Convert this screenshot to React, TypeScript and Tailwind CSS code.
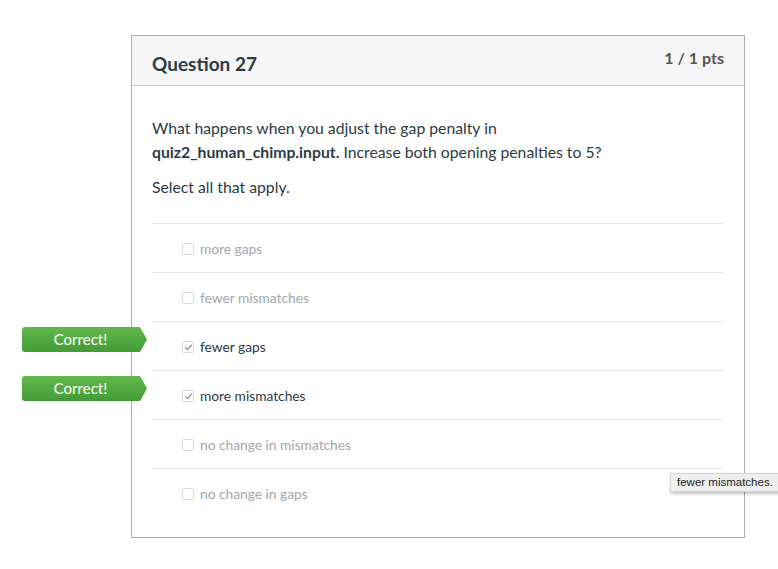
import React from 'react';

type Answer = { text: string; checked: boolean; correct?: boolean };

const answers: Answer[] = [
  { text: 'more gaps', checked: false },
  { text: 'fewer mismatches', checked: false },
  { text: 'fewer gaps', checked: true, correct: true },
  { text: 'more mismatches', checked: true, correct: true },
  { text: 'no change in mismatches', checked: false },
  { text: 'no change in gaps', checked: false },
];

const CorrectBadge: React.FC = () => (
  <div className="absolute right-full top-[5px] mr-[5px] w-[125px] h-[25px] bg-gradient-to-b from-[#64b84d] to-[#429c36] [clip-path:polygon(0_0,118px_0,125px_50%,118px_100%,0_100%)] rounded-l-[3px] flex items-center justify-center pr-[8px] text-white text-[15px]">
    Correct!
  </div>
);

const Checkbox: React.FC<{ checked: boolean }> = ({ checked }) => (
  <span className="w-[12px] h-[12px] rounded-[2px] border border-[#d9dcde] bg-white flex items-center justify-center">
    {checked && (
      <svg width="9" height="9" viewBox="0 0 10 10" fill="none">
        <path d="M1.8 5.2 L4 7.4 L8.3 2.4" stroke="#8a8f93" strokeWidth="1.4" strokeLinecap="round" strokeLinejoin="round" />
      </svg>
    )}
  </span>
);

const App: React.FC = () => {
  return (
    <div className="relative min-h-[569px] w-[778px] overflow-hidden bg-white pt-[35px] pl-[131px] font-['Lato',sans-serif] text-[#2d3b45]">
      <div className="w-[614px] border border-[#adadad]">
        {/* Header */}
        <div className="h-[50px] bg-[#f5f5f5] border-b border-[#c4c4c4] px-[20px] flex justify-between">
          <h2 className="text-[19px] font-bold pt-[14px] leading-[27px]">Question 27</h2>
          <span className="text-[16px] font-bold text-[#555] pt-[11px] leading-[22px]">1 / 1 pts</span>
        </div>

        {/* Body */}
        <div className="px-[20px] pt-[30px] pb-[20px]">
          <p className="text-[15.75px] leading-[24px]">
            What happens when you adjust the gap penalty in
            <br />
            <strong className="font-bold">quiz2_human_chimp.input.</strong> Increase both opening penalties to 5?
          </p>
          <p className="text-[15.75px] leading-[24px] mt-[11px]">Select all that apply.</p>

          <div className="mt-[24px]">
            {answers.map((a) => (
              <div key={a.text} className="relative h-[49px] border-t border-[#e8e8e8] pl-[30px] pt-[2px] flex items-center gap-[6px]">
                {a.correct && <CorrectBadge />}
                <Checkbox checked={a.checked} />
                <span className={`text-[13.75px] ${a.checked ? 'text-[#2d3b45]' : 'text-[#a2a8ac]'}`}>{a.text}</span>
              </div>
            ))}
          </div>
        </div>
      </div>

      {/* Tooltip */}
      <div className="absolute left-[670px] top-[473px] h-[19px] pl-[6px] pr-[8px] bg-[#efefef] border border-[#d4d4d4] shadow-[1px_2px_3px_rgba(0,0,0,0.25)] whitespace-nowrap font-['Liberation_Sans',sans-serif] text-[11.5px] leading-[17px] text-[#222]">
        fewer mismatches.
      </div>
    </div>
  );
};

export default App;
